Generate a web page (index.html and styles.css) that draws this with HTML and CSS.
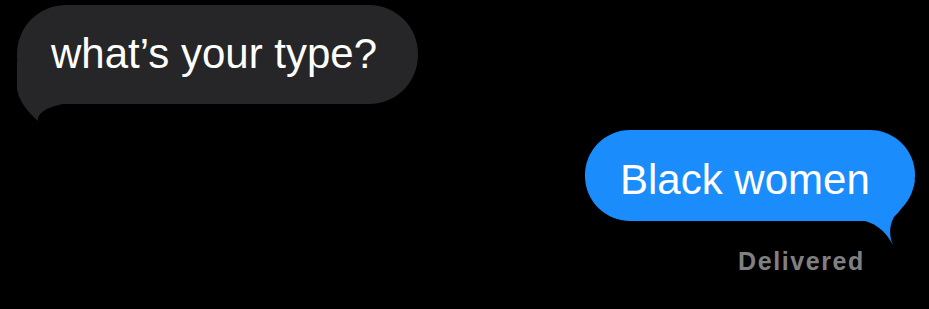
FILE: index.html
```html
<!DOCTYPE html>
<html>
<head>
<meta charset="utf-8">
<link rel="stylesheet" href="styles.css">
</head>
<body>
<div class="thread">
  <div class="row in">
    <div class="bubble gray">
      <svg class="tail tail-left" width="60" height="62" viewBox="0 0 60 62"><path d="M0 0 L0 28 C2 40 10 50 21 60 C20 54 26 47 46 43 L60 43 L60 0 Z" fill="#262628"/></svg>
      <span class="text">what’s your type?</span>
    </div>
  </div>
  <div class="row out">
    <div class="bubble blue">
      <svg class="tail tail-right" width="55" height="66" viewBox="0 0 55 66"><path d="M0 0 L0 40 C14 42 25 50 33 65 C29 56 29 46 34 37 C44 27 52 15 55 0 Z" fill="#1b8cfb"/></svg>
      <span class="text">Black women</span>
    </div>
  </div>
  <div class="status">Delivered</div>
</div>
</body>
</html>
```
FILE: styles.css
```css
html, body {
  margin: 0;
  padding: 0;
  background: #000;
}
body {
  width: 929px;
  height: 309px;
  overflow: hidden;
  font-family: "Liberation Sans", Arial, sans-serif;
}
.thread {
  display: flex;
  flex-direction: column;
  padding: 5px 14px 0 17px;
}
.row {
  display: flex;
}
.row.out {
  justify-content: flex-end;
  margin-top: 26px;
}
.bubble {
  position: relative;
  box-sizing: border-box;
  display: flex;
  align-items: center;
  font-size: 42px;
  color: #fff;
}
.text {
  position: relative;
  z-index: 1;
}
.gray {
  background: #262628;
  width: 401px;
  height: 99px;
  border-radius: 49px;
  padding-left: 34px;
  padding-bottom: 2px;
}
.blue {
  background: #1b8cfb;
  width: 330px;
  height: 91px;
  border-radius: 45px;
  padding-left: 35px;
  padding-top: 9px;
}
.tail {
  position: absolute;
  z-index: 0;
}
.tail-left {
  left: 0;
  top: 56px;
}
.tail-right {
  right: 0;
  top: 50px;
}
.status {
  align-self: flex-end;
  margin-right: 50px;
  margin-top: 26px;
  font-size: 25px;
  font-weight: bold;
  letter-spacing: 1.6px;
  color: #808083;
}
```
